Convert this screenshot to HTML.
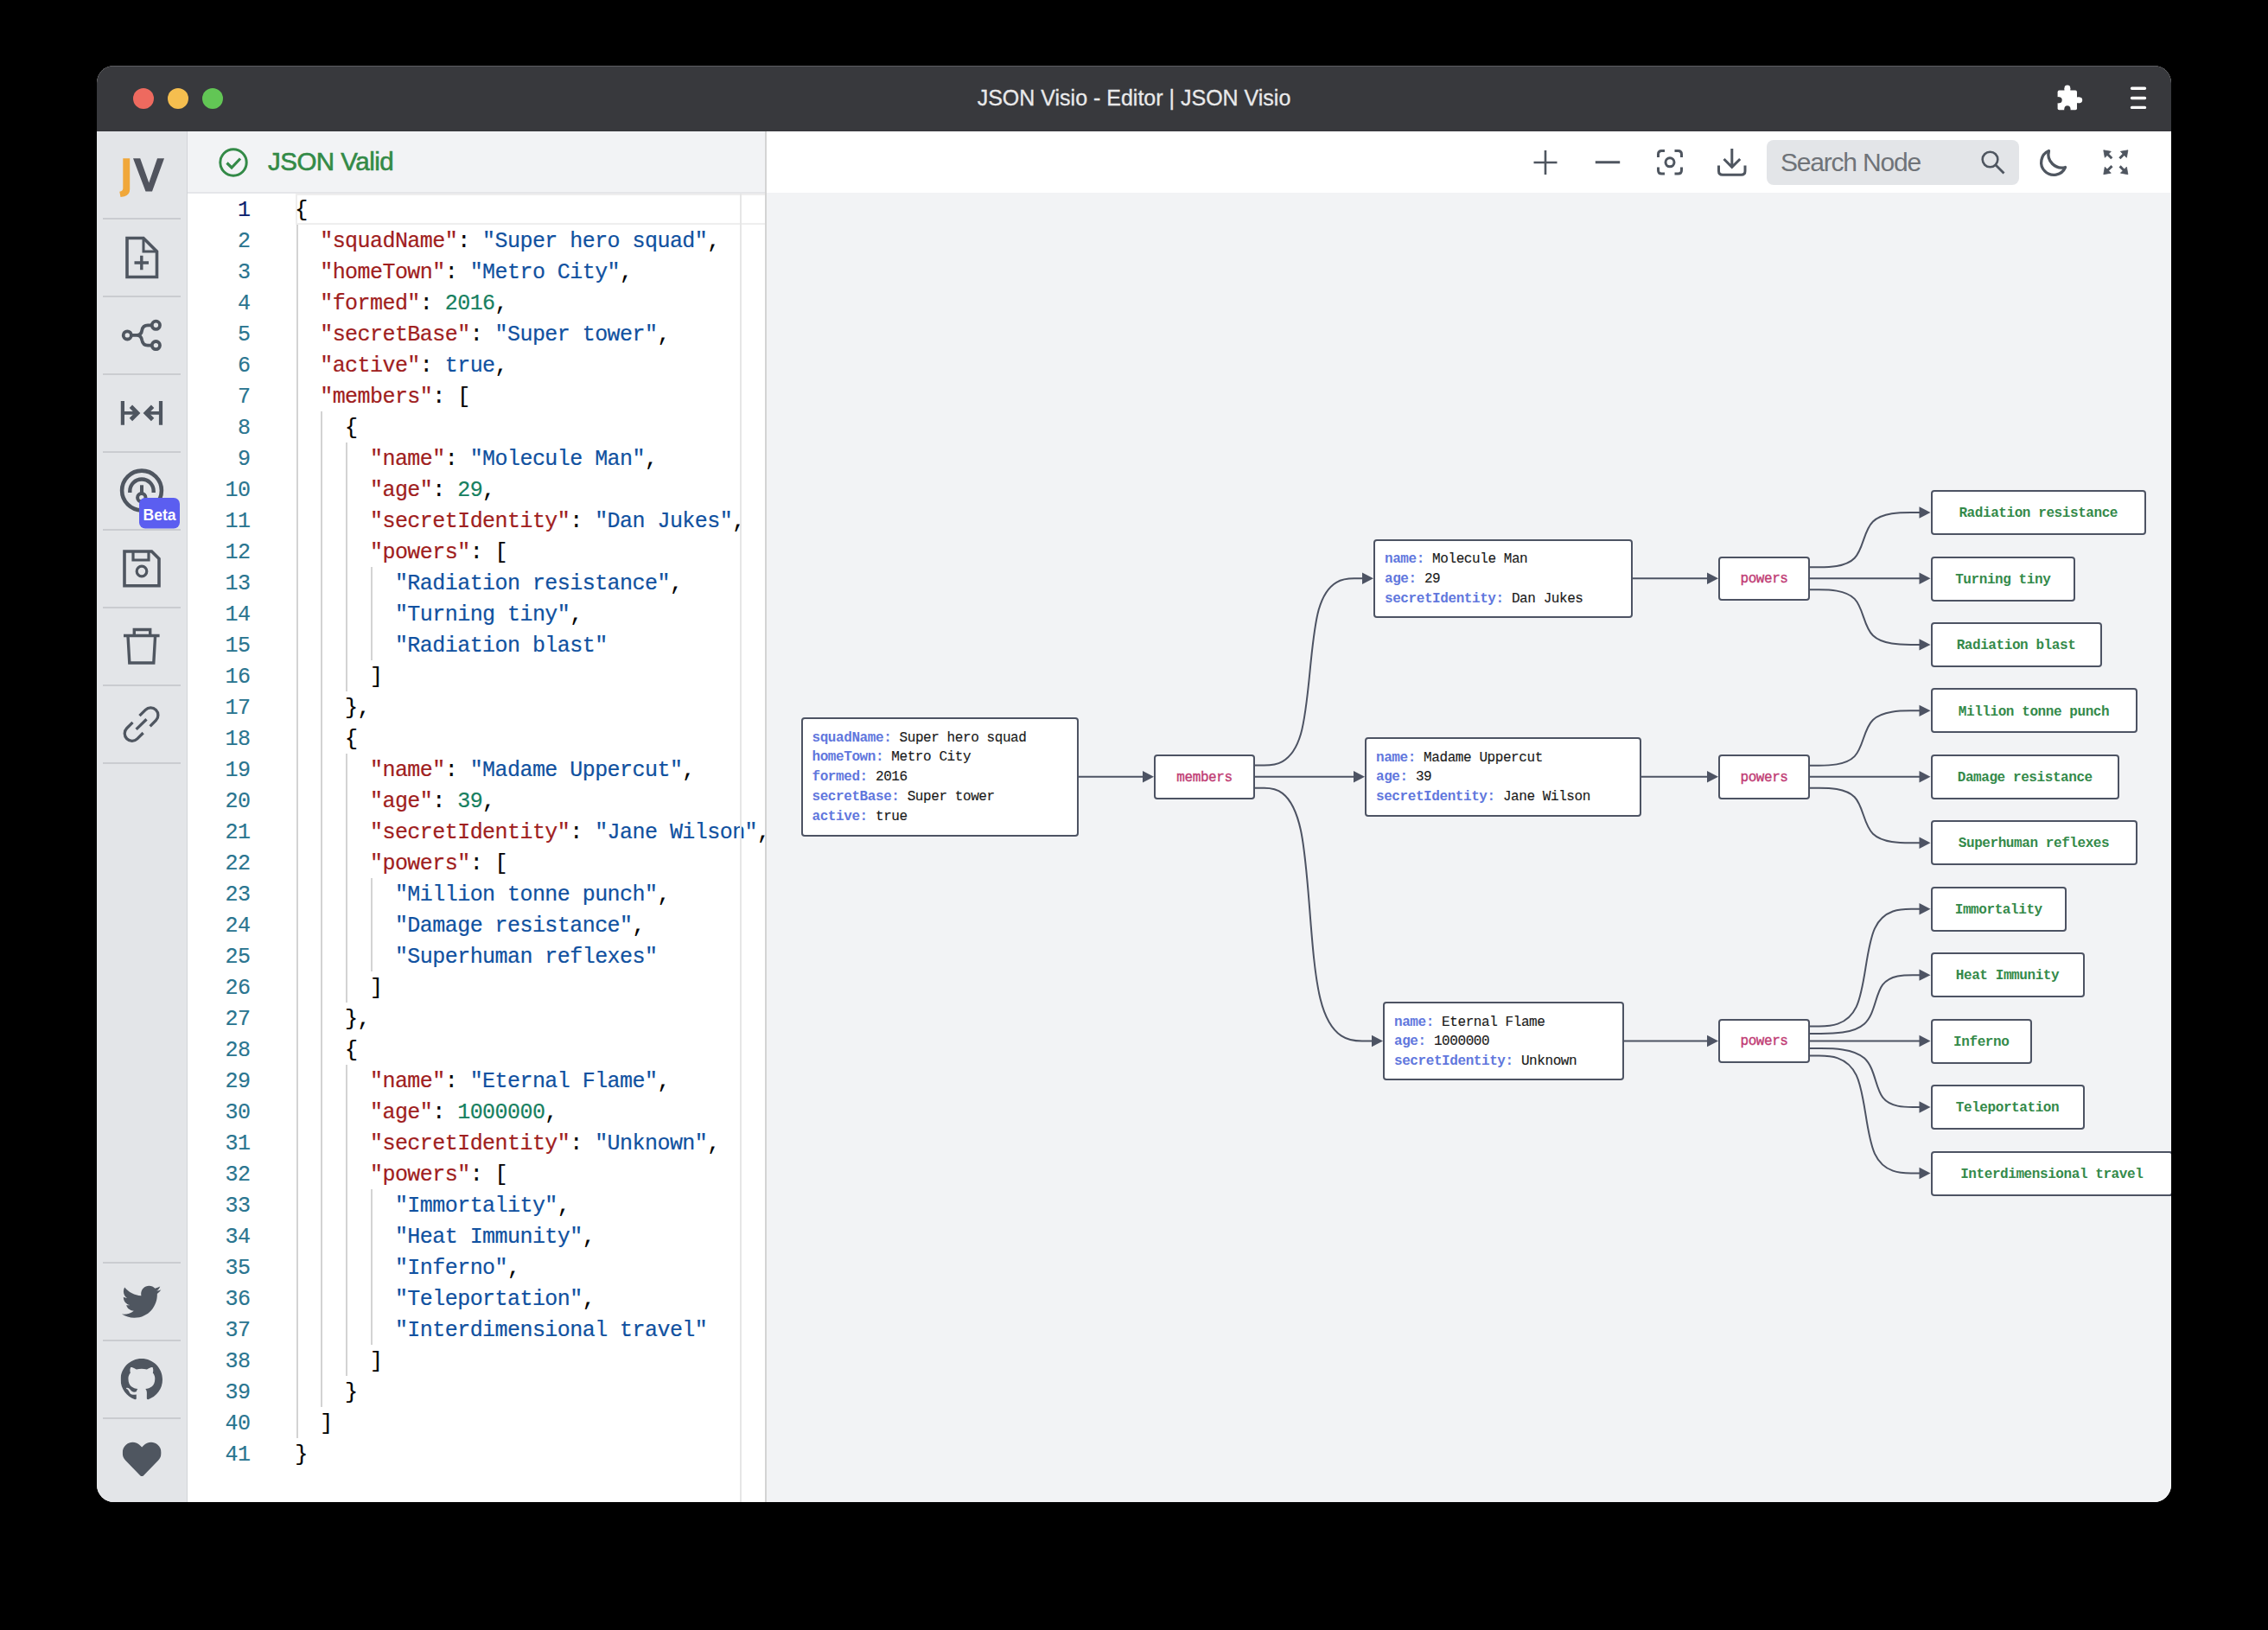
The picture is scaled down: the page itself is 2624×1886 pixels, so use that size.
<!DOCTYPE html><html><head><meta charset="utf-8"><style>
*{box-sizing:border-box;margin:0;padding:0}
html,body{width:2624px;height:1886px;overflow:hidden;background:#000}
.abs{position:absolute}
.win{position:absolute;left:112px;top:76px;width:2400px;height:1662px;border-radius:20px;overflow:hidden;background:#fff}
.inner{position:absolute;left:-112px;top:-76px;width:2624px;height:1886px}
.titlebar{position:absolute;left:112px;top:76px;width:2400px;height:76px;background:#38393d;border-top:1px solid #5d5e62}
.tl{position:absolute;width:24px;height:24px;border-radius:50%;top:102px}
.title{position:absolute;left:112px;width:2400px;top:97.5px;text-align:center;font-family:"Liberation Sans",sans-serif;font-size:25px;-webkit-text-stroke:0.3px #e9e9ea;color:#e9e9ea;line-height:30px}
.sidebar{position:absolute;left:112px;top:152px;width:106px;height:1586px;background:#e3e5e8;border-right:2px solid #d2d4d8}
.edhead{position:absolute;left:217px;top:152px;width:670px;height:72px;background:#f2f3f5;border-bottom:2px solid #e5e6e9}
.jv{position:absolute;left:310px;top:170px;font-family:"Liberation Sans",sans-serif;font-size:29.5px;letter-spacing:-0.5px;-webkit-text-stroke:0.6px #338a47;color:#338a47;line-height:34px}
.editor{position:absolute;left:217px;top:224px;width:670px;height:1514px;background:#fff}
.curline{position:absolute;left:342px;top:224px;width:545px;height:36px;border:2px solid #eeeeee}
.cl{position:absolute;margin-top:1.8px;left:341.3px;-webkit-text-stroke:0.2px currentColor;height:36px;line-height:36px;white-space:pre;font-family:"Liberation Mono",monospace;font-size:25px;letter-spacing:-0.55px;color:#000}
.ln{position:absolute;margin-top:1.8px;left:217px;width:72.5px;-webkit-text-stroke:0.15px #2a7590;text-align:right;height:36px;line-height:36px;font-family:"Liberation Mono",monospace;font-size:25px;letter-spacing:-0.55px;color:#2a7590}
.ln.act{color:#0b216f;-webkit-text-stroke:0.15px #0b216f}
.tk{color:#a02020;-webkit-text-stroke:0.2px #a02020}.ts{color:#1051a0;-webkit-text-stroke:0.2px #1051a0}.tn{color:#168060;-webkit-text-stroke:0.2px #168060}.tb{color:#1051a0;-webkit-text-stroke:0.2px #1051a0}.tp{color:#000;-webkit-text-stroke:0.2px #000}
.ig{position:absolute;width:2px;background:#d3d3d3}
.ruler{position:absolute;left:856px;top:224px;width:1.5px;height:1514px;background:#e6e6e6}
.edborder{position:absolute;left:885px;top:152px;width:2px;height:1586px;background:#d4d4d4}
.graph{position:absolute;left:887px;top:223px;width:1625px;height:1515px;background:#f2f3f5}
.toolbar{position:absolute;left:887px;top:152px;width:1625px;height:71px;background:#fff}
.search{position:absolute;left:2044px;top:162px;width:292px;height:52px;border-radius:8px;background:#e3e5e8}
.searchtxt{position:absolute;left:2060px;top:169.5px;font-family:"Liberation Sans",sans-serif;letter-spacing:-1.2px;font-size:30px;color:#6f7378;line-height:36px}
.edges{position:absolute;left:0;top:0}
.node{position:absolute;background:#fff;border:2px solid #4d5363;border-radius:4px;font-family:"Liberation Mono",monospace;font-size:16px;letter-spacing:-0.42px}
.node.obj{padding:10.5px 0 0 11px}
.row{height:22.8px;line-height:22.8px;white-space:pre;color:#1a1a1a}
.nk{color:#6177dd;font-weight:bold}
.nv{-webkit-text-stroke:0.15px #1a1a1a}
.node.par,.node.leaf{display:flex;align-items:center;justify-content:center;white-space:pre}
.node.par span{color:#c03a73;-webkit-text-stroke:0.35px #c03a73;position:relative;top:1px}
.node.leaf span{color:#348a4a;font-weight:bold;position:relative;top:1.3px}
</style></head><body>
<div class="win"><div class="inner">
<div class="titlebar"></div>
<div class="tl" style="left:154px;background:#ee6a5f"></div>
<div class="tl" style="left:194px;background:#f5be4f"></div>
<div class="tl" style="left:234px;background:#62c655"></div>
<div class="title">JSON Visio - Editor | JSON Visio</div>
<div class="sidebar"></div>
<div class="editor"></div>
<div class="edhead"></div>
<div class="jv">JSON Valid</div>
<div class="curline"></div>
<div class="cl" style="top:224px"><span class="tp">{</span></div>
<div class="ln act" style="top:224px">1</div>
<div class="cl" style="top:260px">  <span class="tk">&quot;squadName&quot;</span><span class="tp">:</span> <span class="ts">&quot;Super hero squad&quot;</span><span class="tp">,</span></div>
<div class="ln" style="top:260px">2</div>
<div class="cl" style="top:296px">  <span class="tk">&quot;homeTown&quot;</span><span class="tp">:</span> <span class="ts">&quot;Metro City&quot;</span><span class="tp">,</span></div>
<div class="ln" style="top:296px">3</div>
<div class="cl" style="top:332px">  <span class="tk">&quot;formed&quot;</span><span class="tp">:</span> <span class="tn">2016</span><span class="tp">,</span></div>
<div class="ln" style="top:332px">4</div>
<div class="cl" style="top:368px">  <span class="tk">&quot;secretBase&quot;</span><span class="tp">:</span> <span class="ts">&quot;Super tower&quot;</span><span class="tp">,</span></div>
<div class="ln" style="top:368px">5</div>
<div class="cl" style="top:404px">  <span class="tk">&quot;active&quot;</span><span class="tp">:</span> <span class="tb">true</span><span class="tp">,</span></div>
<div class="ln" style="top:404px">6</div>
<div class="cl" style="top:440px">  <span class="tk">&quot;members&quot;</span><span class="tp">:</span> <span class="tp">[</span></div>
<div class="ln" style="top:440px">7</div>
<div class="cl" style="top:476px">    <span class="tp">{</span></div>
<div class="ln" style="top:476px">8</div>
<div class="cl" style="top:512px">      <span class="tk">&quot;name&quot;</span><span class="tp">:</span> <span class="ts">&quot;Molecule Man&quot;</span><span class="tp">,</span></div>
<div class="ln" style="top:512px">9</div>
<div class="cl" style="top:548px">      <span class="tk">&quot;age&quot;</span><span class="tp">:</span> <span class="tn">29</span><span class="tp">,</span></div>
<div class="ln" style="top:548px">10</div>
<div class="cl" style="top:584px">      <span class="tk">&quot;secretIdentity&quot;</span><span class="tp">:</span> <span class="ts">&quot;Dan Jukes&quot;</span><span class="tp">,</span></div>
<div class="ln" style="top:584px">11</div>
<div class="cl" style="top:620px">      <span class="tk">&quot;powers&quot;</span><span class="tp">:</span> <span class="tp">[</span></div>
<div class="ln" style="top:620px">12</div>
<div class="cl" style="top:656px">        <span class="ts">&quot;Radiation resistance&quot;</span><span class="tp">,</span></div>
<div class="ln" style="top:656px">13</div>
<div class="cl" style="top:692px">        <span class="ts">&quot;Turning tiny&quot;</span><span class="tp">,</span></div>
<div class="ln" style="top:692px">14</div>
<div class="cl" style="top:728px">        <span class="ts">&quot;Radiation blast&quot;</span></div>
<div class="ln" style="top:728px">15</div>
<div class="cl" style="top:764px">      <span class="tp">]</span></div>
<div class="ln" style="top:764px">16</div>
<div class="cl" style="top:800px">    <span class="tp">}</span><span class="tp">,</span></div>
<div class="ln" style="top:800px">17</div>
<div class="cl" style="top:836px">    <span class="tp">{</span></div>
<div class="ln" style="top:836px">18</div>
<div class="cl" style="top:872px">      <span class="tk">&quot;name&quot;</span><span class="tp">:</span> <span class="ts">&quot;Madame Uppercut&quot;</span><span class="tp">,</span></div>
<div class="ln" style="top:872px">19</div>
<div class="cl" style="top:908px">      <span class="tk">&quot;age&quot;</span><span class="tp">:</span> <span class="tn">39</span><span class="tp">,</span></div>
<div class="ln" style="top:908px">20</div>
<div class="cl" style="top:944px">      <span class="tk">&quot;secretIdentity&quot;</span><span class="tp">:</span> <span class="ts">&quot;Jane Wilson&quot;</span><span class="tp">,</span></div>
<div class="ln" style="top:944px">21</div>
<div class="cl" style="top:980px">      <span class="tk">&quot;powers&quot;</span><span class="tp">:</span> <span class="tp">[</span></div>
<div class="ln" style="top:980px">22</div>
<div class="cl" style="top:1016px">        <span class="ts">&quot;Million tonne punch&quot;</span><span class="tp">,</span></div>
<div class="ln" style="top:1016px">23</div>
<div class="cl" style="top:1052px">        <span class="ts">&quot;Damage resistance&quot;</span><span class="tp">,</span></div>
<div class="ln" style="top:1052px">24</div>
<div class="cl" style="top:1088px">        <span class="ts">&quot;Superhuman reflexes&quot;</span></div>
<div class="ln" style="top:1088px">25</div>
<div class="cl" style="top:1124px">      <span class="tp">]</span></div>
<div class="ln" style="top:1124px">26</div>
<div class="cl" style="top:1160px">    <span class="tp">}</span><span class="tp">,</span></div>
<div class="ln" style="top:1160px">27</div>
<div class="cl" style="top:1196px">    <span class="tp">{</span></div>
<div class="ln" style="top:1196px">28</div>
<div class="cl" style="top:1232px">      <span class="tk">&quot;name&quot;</span><span class="tp">:</span> <span class="ts">&quot;Eternal Flame&quot;</span><span class="tp">,</span></div>
<div class="ln" style="top:1232px">29</div>
<div class="cl" style="top:1268px">      <span class="tk">&quot;age&quot;</span><span class="tp">:</span> <span class="tn">1000000</span><span class="tp">,</span></div>
<div class="ln" style="top:1268px">30</div>
<div class="cl" style="top:1304px">      <span class="tk">&quot;secretIdentity&quot;</span><span class="tp">:</span> <span class="ts">&quot;Unknown&quot;</span><span class="tp">,</span></div>
<div class="ln" style="top:1304px">31</div>
<div class="cl" style="top:1340px">      <span class="tk">&quot;powers&quot;</span><span class="tp">:</span> <span class="tp">[</span></div>
<div class="ln" style="top:1340px">32</div>
<div class="cl" style="top:1376px">        <span class="ts">&quot;Immortality&quot;</span><span class="tp">,</span></div>
<div class="ln" style="top:1376px">33</div>
<div class="cl" style="top:1412px">        <span class="ts">&quot;Heat Immunity&quot;</span><span class="tp">,</span></div>
<div class="ln" style="top:1412px">34</div>
<div class="cl" style="top:1448px">        <span class="ts">&quot;Inferno&quot;</span><span class="tp">,</span></div>
<div class="ln" style="top:1448px">35</div>
<div class="cl" style="top:1484px">        <span class="ts">&quot;Teleportation&quot;</span><span class="tp">,</span></div>
<div class="ln" style="top:1484px">36</div>
<div class="cl" style="top:1520px">        <span class="ts">&quot;Interdimensional travel&quot;</span></div>
<div class="ln" style="top:1520px">37</div>
<div class="cl" style="top:1556px">      <span class="tp">]</span></div>
<div class="ln" style="top:1556px">38</div>
<div class="cl" style="top:1592px">    <span class="tp">}</span></div>
<div class="ln" style="top:1592px">39</div>
<div class="cl" style="top:1628px">  <span class="tp">]</span></div>
<div class="ln" style="top:1628px">40</div>
<div class="cl" style="top:1664px"><span class="tp">}</span></div>
<div class="ln" style="top:1664px">41</div>
<div class="ig" style="left:342.5px;top:260px;height:1404px"></div>
<div class="ig" style="left:371.4px;top:476px;height:1152px"></div>
<div class="ig" style="left:400.3px;top:512px;height:288px"></div>
<div class="ig" style="left:400.3px;top:872px;height:288px"></div>
<div class="ig" style="left:400.3px;top:1232px;height:360px"></div>
<div class="ig" style="left:429.2px;top:656px;height:108px"></div>
<div class="ig" style="left:429.2px;top:1016px;height:108px"></div>
<div class="ig" style="left:429.2px;top:1376px;height:180px"></div>
<div class="ruler"></div>
<div class="graph"></div>
<div class="toolbar"></div>
<div class="search"></div>
<div class="searchtxt">Search Node</div>
<svg class="edges" width="2624" height="1886" viewBox="0 0 2624 1886">
<path d="M1247.00,898.70 L1323.00,898.70" fill="none" stroke="#4d5363" stroke-width="2"/>
<path d="M1335.00,898.70 L1322.00,892.00 L1322.00,905.40 Z" fill="#4d5363"/>
<path d="M1452.00,885.60 L1462.58,885.60 C1473.17,885.60 1494.33,885.60 1504.92,849.55 C1515.50,813.50 1515.50,741.40 1525.75,705.35 C1536.00,669.30 1556.50,669.30 1566.75,669.30 L1577.00,669.30" fill="none" stroke="#4d5363" stroke-width="2"/>
<path d="M1589.00,669.30 L1576.00,662.60 L1576.00,676.00 Z" fill="#4d5363"/>
<path d="M1452.00,898.70 L1567.00,898.70" fill="none" stroke="#4d5363" stroke-width="2"/>
<path d="M1579.00,898.70 L1566.00,892.00 L1566.00,905.40 Z" fill="#4d5363"/>
<path d="M1452.00,911.80 L1462.58,911.80 C1473.17,911.80 1494.33,911.80 1504.92,960.58 C1515.50,1009.37 1515.50,1106.93 1527.58,1155.72 C1539.67,1204.50 1563.83,1204.50 1575.92,1204.50 L1588.00,1204.50" fill="none" stroke="#4d5363" stroke-width="2"/>
<path d="M1600.00,1204.50 L1587.00,1197.80 L1587.00,1211.20 Z" fill="#4d5363"/>
<path d="M1889.00,669.30 L1976.00,669.30" fill="none" stroke="#4d5363" stroke-width="2"/>
<path d="M1988.00,669.30 L1975.00,662.60 L1975.00,676.00 Z" fill="#4d5363"/>
<path d="M1899.00,898.70 L1976.00,898.70" fill="none" stroke="#4d5363" stroke-width="2"/>
<path d="M1988.00,898.70 L1975.00,892.00 L1975.00,905.40 Z" fill="#4d5363"/>
<path d="M1879.00,1204.50 L1976.00,1204.50" fill="none" stroke="#4d5363" stroke-width="2"/>
<path d="M1988.00,1204.50 L1975.00,1197.80 L1975.00,1211.20 Z" fill="#4d5363"/>
<path d="M2094.00,656.30 L2104.33,656.30 C2114.67,656.30 2135.33,656.30 2145.67,645.75 C2156.00,635.20 2156.00,614.10 2166.92,603.55 C2177.83,593.00 2199.67,593.00 2210.58,593.00 L2221.50,593.00" fill="none" stroke="#4d5363" stroke-width="2"/>
<path d="M2233.50,593.00 L2220.50,586.30 L2220.50,599.70 Z" fill="#4d5363"/>
<path d="M2094.00,669.30 L2221.50,669.30" fill="none" stroke="#4d5363" stroke-width="2"/>
<path d="M2233.50,669.30 L2220.50,662.60 L2220.50,676.00 Z" fill="#4d5363"/>
<path d="M2094.00,682.30 L2104.33,682.30 C2114.67,682.30 2135.33,682.30 2145.67,692.90 C2156.00,703.50 2156.00,724.70 2166.92,735.30 C2177.83,745.90 2199.67,745.90 2210.58,745.90 L2221.50,745.90" fill="none" stroke="#4d5363" stroke-width="2"/>
<path d="M2233.50,745.90 L2220.50,739.20 L2220.50,752.60 Z" fill="#4d5363"/>
<path d="M2094.00,885.70 L2104.33,885.70 C2114.67,885.70 2135.33,885.70 2145.67,875.14 C2156.00,864.58 2156.00,843.47 2166.92,832.91 C2177.83,822.35 2199.67,822.35 2210.58,822.35 L2221.50,822.35" fill="none" stroke="#4d5363" stroke-width="2"/>
<path d="M2233.50,822.35 L2220.50,815.65 L2220.50,829.05 Z" fill="#4d5363"/>
<path d="M2094.00,898.70 L2221.50,898.70" fill="none" stroke="#4d5363" stroke-width="2"/>
<path d="M2233.50,898.70 L2220.50,892.00 L2220.50,905.40 Z" fill="#4d5363"/>
<path d="M2094.00,911.70 L2104.33,911.70 C2114.67,911.70 2135.33,911.70 2145.67,922.29 C2156.00,932.88 2156.00,954.07 2166.92,964.66 C2177.83,975.25 2199.67,975.25 2210.58,975.25 L2221.50,975.25" fill="none" stroke="#4d5363" stroke-width="2"/>
<path d="M2233.50,975.25 L2220.50,968.55 L2220.50,981.95 Z" fill="#4d5363"/>
<path d="M2094.00,1187.50 L2104.75,1187.50 C2115.50,1187.50 2137.00,1187.50 2147.75,1164.87 C2158.50,1142.23 2158.50,1096.97 2169.00,1074.33 C2179.50,1051.70 2200.50,1051.70 2211.00,1051.70 L2221.50,1051.70" fill="none" stroke="#4d5363" stroke-width="2"/>
<path d="M2233.50,1051.70 L2220.50,1045.00 L2220.50,1058.40 Z" fill="#4d5363"/>
<path d="M2094.00,1196.00 L2106.58,1196.00 C2119.17,1196.00 2144.33,1196.00 2156.92,1184.69 C2169.50,1173.38 2169.50,1150.77 2178.17,1139.46 C2186.83,1128.15 2204.17,1128.15 2212.83,1128.15 L2221.50,1128.15" fill="none" stroke="#4d5363" stroke-width="2"/>
<path d="M2233.50,1128.15 L2220.50,1121.45 L2220.50,1134.85 Z" fill="#4d5363"/>
<path d="M2094.00,1204.50 L2221.50,1204.50" fill="none" stroke="#4d5363" stroke-width="2"/>
<path d="M2233.50,1204.50 L2220.50,1197.80 L2220.50,1211.20 Z" fill="#4d5363"/>
<path d="M2094.00,1213.00 L2106.58,1213.00 C2119.17,1213.00 2144.33,1213.00 2156.92,1224.34 C2169.50,1235.68 2169.50,1258.37 2178.17,1269.71 C2186.83,1281.05 2204.17,1281.05 2212.83,1281.05 L2221.50,1281.05" fill="none" stroke="#4d5363" stroke-width="2"/>
<path d="M2233.50,1281.05 L2220.50,1274.35 L2220.50,1287.75 Z" fill="#4d5363"/>
<path d="M2094.00,1221.50 L2104.75,1221.50 C2115.50,1221.50 2137.00,1221.50 2147.75,1244.17 C2158.50,1266.83 2158.50,1312.17 2169.00,1334.83 C2179.50,1357.50 2200.50,1357.50 2211.00,1357.50 L2221.50,1357.50" fill="none" stroke="#4d5363" stroke-width="2"/>
<path d="M2233.50,1357.50 L2220.50,1350.80 L2220.50,1364.20 Z" fill="#4d5363"/>
</svg>
<div class="node obj" style="left:926.5px;top:830.0px;width:321.5px;height:138.0px"><div class="row"><span class="nk">squadName:</span> <span class="nv">Super hero squad</span></div><div class="row"><span class="nk">homeTown:</span> <span class="nv">Metro City</span></div><div class="row"><span class="nk">formed:</span> <span class="nv">2016</span></div><div class="row"><span class="nk">secretBase:</span> <span class="nv">Super tower</span></div><div class="row"><span class="nk">active:</span> <span class="nv">true</span></div></div>
<div class="node par" style="left:1335.0px;top:873.0px;width:117.0px;height:51.5px"><span>members</span></div>
<div class="node obj" style="left:1589.0px;top:623.5px;width:300.0px;height:91.5px"><div class="row"><span class="nk">name:</span> <span class="nv">Molecule Man</span></div><div class="row"><span class="nk">age:</span> <span class="nv">29</span></div><div class="row"><span class="nk">secretIdentity:</span> <span class="nv">Dan Jukes</span></div></div>
<div class="node obj" style="left:1579.0px;top:853.0px;width:320.0px;height:91.5px"><div class="row"><span class="nk">name:</span> <span class="nv">Madame Uppercut</span></div><div class="row"><span class="nk">age:</span> <span class="nv">39</span></div><div class="row"><span class="nk">secretIdentity:</span> <span class="nv">Jane Wilson</span></div></div>
<div class="node obj" style="left:1600.0px;top:1159.0px;width:279.0px;height:91.0px"><div class="row"><span class="nk">name:</span> <span class="nv">Eternal Flame</span></div><div class="row"><span class="nk">age:</span> <span class="nv">1000000</span></div><div class="row"><span class="nk">secretIdentity:</span> <span class="nv">Unknown</span></div></div>
<div class="node par" style="left:1988.0px;top:643.5px;width:106.0px;height:51.5px"><span>powers</span></div>
<div class="node par" style="left:1988.0px;top:873.0px;width:106.0px;height:51.5px"><span>powers</span></div>
<div class="node par" style="left:1988.0px;top:1178.5px;width:106.0px;height:51.5px"><span>powers</span></div>
<div class="node leaf" style="left:2233.5px;top:567.0px;width:249.5px;height:52.0px"><span>Radiation resistance</span></div>
<div class="node leaf" style="left:2233.5px;top:643.5px;width:167.5px;height:52.0px"><span>Turning tiny</span></div>
<div class="node leaf" style="left:2233.5px;top:719.9px;width:198.0px;height:52.0px"><span>Radiation blast</span></div>
<div class="node leaf" style="left:2233.5px;top:796.4px;width:239.0px;height:52.0px"><span>Million tonne punch</span></div>
<div class="node leaf" style="left:2233.5px;top:872.8px;width:218.5px;height:52.0px"><span>Damage resistance</span></div>
<div class="node leaf" style="left:2233.5px;top:949.2px;width:239.0px;height:52.0px"><span>Superhuman reflexes</span></div>
<div class="node leaf" style="left:2233.5px;top:1025.7px;width:157.5px;height:52.0px"><span>Immortality</span></div>
<div class="node leaf" style="left:2233.5px;top:1102.2px;width:178.0px;height:52.0px"><span>Heat Immunity</span></div>
<div class="node leaf" style="left:2233.5px;top:1178.6px;width:117.5px;height:52.0px"><span>Inferno</span></div>
<div class="node leaf" style="left:2233.5px;top:1255.1px;width:178.0px;height:52.0px"><span>Teleportation</span></div>
<div class="node leaf" style="left:2233.5px;top:1331.5px;width:280.5px;height:52.0px"><span>Interdimensional travel</span></div>
<div class="edborder"></div>

<svg class="abs" style="left:0;top:0" width="2624" height="1886" viewBox="0 0 2624 1886">
 <!-- JV logo -->
 <path d="M142.3,183.3 H150.2 V219 Q150.2,225.5 144,227.3 L139.5,228 L138.3,221.8 Q142.3,221 142.3,218 Z" fill="#f0a73a"/>
 <path d="M154,183.3 H162.2 L172.3,211.5 L182,183.3 H190 L176,221.5 H168.5 Z" fill="#51545e"/>
 <!-- separators -->
 <g fill="#caccd0">
  <rect x="119" y="252" width="90" height="2"/>
  <rect x="119" y="342" width="90" height="2"/>
  <rect x="119" y="432" width="90" height="2"/>
  <rect x="119" y="522" width="90" height="2"/>
  <rect x="119" y="612" width="90" height="2"/>
  <rect x="119" y="702" width="90" height="2"/>
  <rect x="119" y="792" width="90" height="2"/>
  <rect x="119" y="882" width="90" height="2"/>
  <rect x="119" y="1460" width="90" height="2"/>
  <rect x="119" y="1550" width="90" height="2"/>
  <rect x="119" y="1640" width="90" height="2"/>
 </g>
 <g fill="none" stroke="#4f5660" stroke-width="3.6">
  <!-- file add -->
  <path d="M147,275.5 H166 L181.5,291 V320.5 H147 Z" stroke-linejoin="miter"/>
  <path d="M166,275.5 V291 H181.5" stroke-width="3"/>
  <path d="M155.5,304 H172 M163.8,295.8 V312.2" stroke-width="3.4"/>
  <!-- share/graph -->
  <circle cx="147.3" cy="387.9" r="4.6" stroke-width="3.8"/>
  <circle cx="180.4" cy="376.3" r="4.6" stroke-width="3.8"/>
  <circle cx="180.4" cy="399.6" r="4.6" stroke-width="3.8"/>
  <path d="M151.5,387.9 H158 Q163.5,387.9 164.3,382 Q165.3,376.3 171,376.3 H176 M158,387.9 Q163.5,387.9 164.3,393.8 Q165.3,399.6 171,399.6 H176" stroke-width="3.8"/>
  <!-- compress -->
  <path d="M141.9,464 V491.8 M186,464 V491.8" stroke-width="4.2"/>
  <path d="M143.9,477.9 H156 M184,477.9 H172" stroke-width="3.6"/>
  <path d="M151.4,470.3 L159,477.9 L151.4,485.5 M176.6,470.3 L169,477.9 L176.6,485.5" stroke-width="4.8" stroke-linecap="butt" stroke-linejoin="miter"/>
  <!-- beta icon -->
  <circle cx="164" cy="567.5" r="22.9" stroke-width="4.6"/>
  <path d="M150.3,570 V568.2 A13.7,13.7 0 0 1 177.7,568.2 V570" stroke-width="4.4"/>
  <path d="M164,561.3 V570.5" stroke-width="4"/>
  <circle cx="163.8" cy="575.8" r="4.7" stroke-width="4"/>
  <!-- save -->
  <path d="M144,638 H175.5 L184,646.5 V677.8 H144 Z" stroke-width="3.6"/>
  <path d="M154,638 V648 H172 V638" stroke-width="3.2"/>
  <circle cx="164" cy="661" r="5.8" stroke-width="3.2"/>
  <!-- trash -->
  <path d="M143,735.5 H184.6" stroke-width="3.4"/>
  <path d="M155.3,735.5 V728.5 H173.7 V735.5" stroke-width="3.4"/>
  <path d="M148,735.5 L149.8,767 H177.8 L179.6,735.5" stroke-width="3.4"/>
  <!-- link -->
  <path d="M161.46,828.18 L168.32,821.32 A8.6,8.6 0 0 1 180.48,833.48 L173.62,840.34" stroke-width="3.3" stroke-linecap="butt"/>
  <path d="M153.48,835.86 L146.62,842.72 A8.6,8.6 0 0 0 158.78,854.88 L165.64,848.02" stroke-width="3.3" stroke-linecap="butt"/>
  <path d="M157.6,843.9 L169.5,832.3" stroke-width="3.3" stroke-linecap="butt"/>
 </g>
 <g fill="#4f5660">
  <!-- beta badge -->
  <rect x="161" y="576" width="47" height="35.5" rx="7" fill="#5b5ef0"/>
 </g>
 <text x="184.5" y="601.5" text-anchor="middle" font-family="Liberation Sans" font-weight="bold" font-size="17.5" fill="#ffffff">Beta</text>
 <!-- twitter -->
 <svg x="141" y="1483.5" width="45.5" height="45.5" viewBox="0 0 512 512" fill="#4f5660"><path d="M459.37 151.716c.325 4.548.325 9.097.325 13.645 0 138.72-105.583 298.558-298.558 298.558-59.452 0-114.68-17.219-161.137-47.106 8.447.974 16.568 1.299 25.34 1.299 49.055 0 94.213-16.568 130.274-44.832-46.132-.975-84.792-31.188-98.112-72.772 6.498.974 12.995 1.624 19.818 1.624 9.421 0 18.843-1.3 27.614-3.573-48.081-9.747-84.143-51.98-84.143-102.985v-1.299c13.969 7.797 30.214 12.67 47.431 13.319-28.264-18.843-46.781-51.005-46.781-87.391 0-19.492 5.197-37.36 14.294-52.954 51.655 63.675 129.3 105.258 216.365 109.807-1.624-7.797-2.599-15.918-2.599-24.04 0-57.828 46.782-104.934 104.934-104.934 30.213 0 57.502 12.67 76.67 33.137 23.715-4.548 46.456-13.32 66.599-25.34-7.798 24.366-24.366 44.833-46.132 57.827 21.117-2.273 41.584-8.122 60.426-16.243-14.292 20.791-32.161 39.308-52.628 54.253z"/></svg>
 <!-- github -->
 <svg x="139.6" y="1572" width="48.4" height="48.4" viewBox="0 0 16 16" fill="#4f5660"><path d="M8 0C3.58 0 0 3.58 0 8c0 3.54 2.29 6.53 5.47 7.59.4.07.55-.17.55-.38 0-.19-.01-.82-.01-1.49-2.01.37-2.53-.49-2.69-.94-.09-.23-.48-.94-.82-1.13-.28-.15-.68-.52-.01-.53.63-.01 1.08.58 1.23.82.72 1.21 1.87.87 2.33.66.07-.52.28-.87.51-1.07-1.78-.2-3.64-.89-3.64-3.95 0-.87.31-1.59.82-2.15-.08-.2-.36-1.02.08-2.12 0 0 .67-.21 2.2.82.64-.18 1.32-.27 2-.27.68 0 1.36.09 2 .27 1.53-1.04 2.2-.82 2.2-.82.44 1.1.16 1.92.08 2.12.51.56.82 1.27.82 2.15 0 3.07-1.87 3.75-3.65 3.95.29.25.54.73.54 1.48 0 1.07-.01 1.93-.01 2.2 0 .21.15.46.55.38A8.013 8.013 0 0016 8c0-4.42-3.58-8-8-8z"/></svg>
 <!-- heart -->
 <svg x="141.7" y="1666" width="44.9" height="44.9" viewBox="0 0 512 512" fill="#4f5660"><path d="M462.3 62.6C407.5 15.9 326 24.3 275.7 76.2L256 96.5l-19.7-20.3C186.1 24.3 104.5 15.9 49.7 62.6c-62.8 53.6-66.1 149.8-9.9 207.9l193.5 199.8c12.5 12.9 32.8 12.9 45.3 0l193.5-199.8c56.3-58.1 53-154.3-9.8-207.9z"/></svg>
 <!-- JSON valid check -->
 <circle cx="270" cy="188" r="15.2" fill="none" stroke="#338a47" stroke-width="3"/>
 <path d="M262.5,188.5 L268,194 L278,183.5" fill="none" stroke="#338a47" stroke-width="3.2"/>
 <!-- toolbar icons -->
 <g fill="none" stroke="#4f5660" stroke-width="2.6">
  <path d="M1788,174 V202 M1774.5,188 H1801.5"/>
  <path d="M1845.8,187.8 H1874.2" stroke-width="3"/>
  <path d="M1918.5,182 V178.5 Q1918.5,174.5 1922.5,174.5 H1926 M1937.5,174.5 H1941.5 Q1945.5,174.5 1945.5,178.5 V182 M1945.5,193.5 V197 Q1945.5,201 1941.5,201 H1937.5 M1926,201 H1922.5 Q1918.5,201 1918.5,197 V193.5" stroke-width="3"/>
  <circle cx="1932" cy="187.8" r="5" stroke-width="3"/>
  <path d="M2003.8,172 V193 M1994.5,184 L2003.8,193.3 L2013.2,184" stroke-width="3"/>
  <path d="M1988.5,191.5 V198 Q1988.5,202.3 1993,202.3 H2014.5 Q2019,202.3 2019,198 V191.5" stroke-width="3"/>
  <circle cx="2302.5" cy="184.5" r="8.8" stroke-width="2.6"/>
  <path d="M2309,191 L2318.5,200.5" stroke-width="2.8"/>
  <path d="M2370.5,174.5 A14.5,14.5 0 1 0 2389.5,193.5 A15.5,15.5 0 0 1 2370.5,174.5 Z" stroke-width="3.3" stroke-linejoin="round"/>
 </g>
 <g fill="#4f5660" stroke="#4f5660">
  <path d="M2437.5,177.5 L2443.3,183.3 M2458.2,177.5 L2452.4,183.3 M2437.5,198 L2443.5,192.2 M2458.2,198 L2452.6,192.4" stroke-width="3" fill="none"/>
  <path d="M2433.8,173.8 L2442.3,175.3 L2435.3,182.3 Z M2461.9,173.8 L2460.4,182.3 L2453.4,175.3 Z M2433.8,201.7 L2435.3,193.2 L2442.3,200.2 Z M2461.9,201.7 L2453.4,200.2 L2460.4,193.2 Z" stroke-width="0.8" stroke-linejoin="miter"/>
 </g>
 <!-- titlebar icons -->
 <g fill="#ffffff">
  <rect x="2380.6" y="104.6" width="22.4" height="22.6" rx="1.8"/>
  <circle cx="2391.9" cy="101.9" r="3.4"/>
  <rect x="2388.5" y="101.9" width="6.8" height="4"/>
  <circle cx="2405.8" cy="115.8" r="3.4"/>
  <rect x="2401" y="112.4" width="4.8" height="6.8"/>
 </g>
 <g fill="#38393d">
  <circle cx="2382.2" cy="115.8" r="3.5"/>
  <rect x="2378" y="112.3" width="4.2" height="7"/>
  <circle cx="2391.9" cy="125.8" r="3.5"/>
  <rect x="2388.4" y="125.8" width="7" height="3"/>
 </g>
 <g stroke="#ffffff" stroke-width="3.4" stroke-linecap="round">
  <path d="M2466.5,102.3 H2481.5 M2466.5,113.5 H2481.5 M2466.5,124.4 H2481.5"/>
 </g>
</svg>

</div></div>
</body></html>
